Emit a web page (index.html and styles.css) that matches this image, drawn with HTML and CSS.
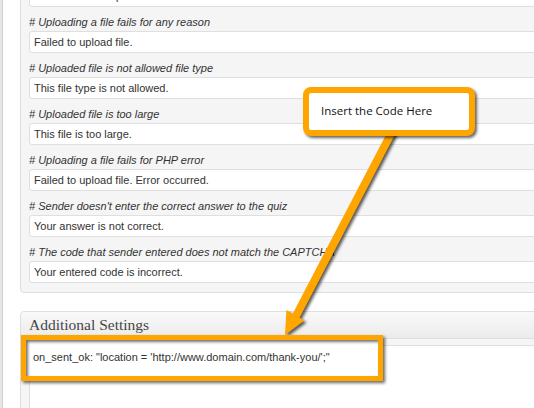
FILE: index.html
```html
<!DOCTYPE html>
<html>
<head>
<meta charset="utf-8">
<link rel="stylesheet" href="styles.css">
</head>
<body>
<div class="screen">
  <div class="rail"></div>
  <div class="main">
    <div class="panel messages">
      <div class="input">Please fill the required field.</div>
      <div class="label"># Uploading a file fails for any reason</div>
      <div class="input">Failed to upload file.</div>
      <div class="label"># Uploaded file is not allowed file type</div>
      <div class="input">This file type is not allowed.</div>
      <div class="label"># Uploaded file is too large</div>
      <div class="input">This file is too large.</div>
      <div class="label"># Uploading a file fails for PHP error</div>
      <div class="input">Failed to upload file. Error occurred.</div>
      <div class="label"># Sender doesn't enter the correct answer to the quiz</div>
      <div class="input">Your answer is not correct.</div>
      <div class="label"># The code that sender entered does not match the CAPTCHA</div>
      <div class="input">Your entered code is incorrect.</div>
    </div>
    <div class="panel additional">
      <h3 class="panel-title">Additional Settings</h3>
      <div class="panel-body"><div class="textarea"></div></div>
    </div>
  </div>
  <svg class="arrow" width="534" height="408" viewBox="0 0 534 408">
    <line x1="394" y1="128" x2="296" y2="316" stroke="#ffa500" stroke-width="8"/>
    <polygon points="285,335 286.5,310 304.5,320.5" fill="#ffa500"/>
  </svg>
  <div class="callout">Insert the Code Here</div>
  <div class="highlight">on_sent_ok: "location = 'http://www.domain.com/thank-you/';"</div>
</div>
</body>
</html>
```
FILE: styles.css
```css
* { box-sizing: border-box; }
html, body { margin: 0; padding: 0; background: #fff; }
.screen {
  position: relative;
  width: 534px;
  height: 408px;
  overflow: hidden;
  display: flex;
  background: #fff;
}
.rail {
  width: 3px;
  flex: none;
  background: #e6e6e6;
  border-right: 1px solid #d2d2d2;
}
.main {
  flex: none;
  width: 600px;
  padding-left: 17px;
}
.panel {
  border: 1px solid #dfdfdf;
  border-radius: 4px;
  background: #f5f5f5;
  width: 583px;
}
.messages {
  margin-top: -16px;
  padding: 0 8px 9px 8px;
}
.input {
  height: 22px;
  border: 1px solid #dfdfdf;
  border-radius: 3px;
  background: #fff;
  font-family: "Liberation Sans", Arial, sans-serif;
  font-size: 11px;
  line-height: 20px;
  color: #333;
  padding-left: 4px;
  white-space: nowrap;
}
.label {
  height: 24px;
  padding-top: 8px;
  font-family: "Liberation Sans", Arial, sans-serif;
  font-size: 11px;
  line-height: 14px;
  font-style: italic;
  color: #333;
  white-space: nowrap;
}
.additional {
  margin-top: 18px;
}
.panel-title {
  margin: 0;
  height: 27px;
  padding-left: 8px;
  background: linear-gradient(#f9f9f9, #ececec);
  border-bottom: 1px solid #dfdfdf;
  border-radius: 4px 4px 0 0;
  font-family: "Liberation Serif", Georgia, serif;
  font-weight: normal;
  font-size: 15.5px;
  line-height: 26px;
  color: #464646;
}
.panel-body {
  padding: 6px 8px 0 8px;
}
.textarea {
  height: 120px;
  border: 1px solid #dfdfdf;
  background: #fff;
}
.arrow {
  position: absolute;
  left: 0;
  top: 0;
  filter: drop-shadow(2px 2px 1.5px rgba(0,0,0,0.65));
}
.callout {
  position: absolute;
  left: 303px;
  top: 87px;
  width: 172px;
  height: 49px;
  border: 6px solid #ffa500;
  border-radius: 8px;
  background: #fff;
  box-shadow: 2px 2px 3px rgba(0,0,0,0.6);
  padding: 10px 0 0 12px;
  font-family: "Open Sans", "Noto Sans", sans-serif;
  font-size: 11.5px;
  line-height: 16px;
  color: #111;
}
.highlight {
  position: absolute;
  left: 21px;
  top: 335px;
  width: 362px;
  height: 46px;
  border: 5px solid #ffa500;
  background: #fff;
  box-shadow: 2px 2px 3px rgba(0,0,0,0.6), inset 2px 2px 3px rgba(0,0,0,0.55);
  padding: 10px 0 0 7px;
  font-family: "Liberation Sans", Arial, sans-serif;
  font-size: 11px;
  line-height: 14px;
  color: #333;
  white-space: nowrap;
}
```
